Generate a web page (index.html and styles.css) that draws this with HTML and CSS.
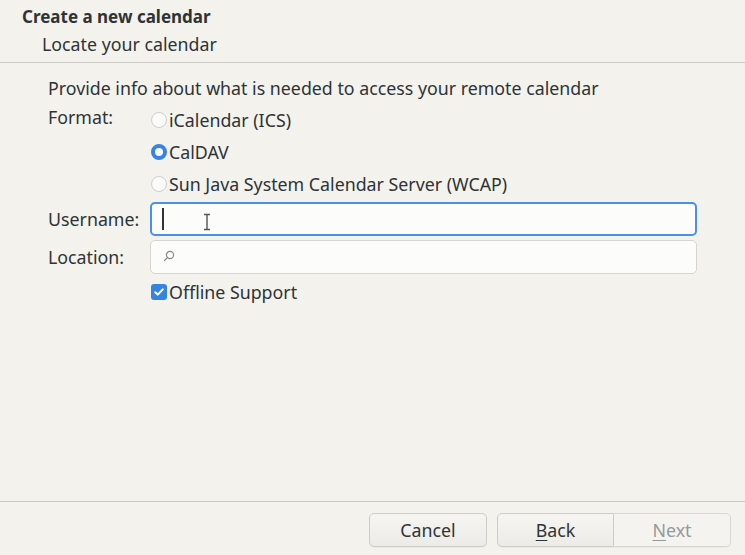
FILE: index.html
```html
<!DOCTYPE html>
<html>
<head>
<meta charset="utf-8">
<link rel="stylesheet" href="styles.css">
</head>
<body>
<div class="window">
  <header class="head">
    <div class="title">Create a new calendar</div>
    <div class="subtitle">Locate your calendar</div>
  </header>
  <main class="content">
    <div class="intro">Provide info about what is needed to access your remote calendar</div>
    <div class="form">
      <div class="label label-format">Format:</div>
      <div class="radios">
        <label class="choice"><span class="radio"></span>iCalendar (ICS)</label>
        <label class="choice"><span class="radio checked"></span>CalDAV</label>
        <label class="choice"><span class="radio"></span>Sun Java System Calendar Server (WCAP)</label>
      </div>
      <div class="label label-user">Username:</div>
      <div class="entry focused">
        <span class="caret"></span>
        <svg class="ibeam" width="8" height="18" viewBox="0 0 8 18"><path d="M1 1.5h6M1 16.5h6M4 1.5v15" stroke="#555" stroke-width="1.4" fill="none"/></svg>
      </div>
      <div class="label label-loc">Location:</div>
      <div class="entry">
        <svg class="search" width="12" height="12" viewBox="0 0 12 12"><circle cx="7" cy="5" r="3.6" stroke="#8a8a86" stroke-width="1.2" fill="none"/><path d="M4.4 7.6L1.5 10.5" stroke="#8a8a86" stroke-width="1.3" stroke-linecap="round"/></svg>
      </div>
      <div class="spacer"></div>
      <label class="choice check-row"><span class="checkbox"><svg width="12" height="12" viewBox="0 0 12 12"><path d="M2.2 6.2L4.8 8.6L9.8 3.4" stroke="#fff" stroke-width="2" fill="none" stroke-linecap="round" stroke-linejoin="round"/></svg></span>Offline Support</label>
    </div>
  </main>
  <footer class="foot">
    <button class="btn cancel">Cancel</button>
    <div class="linked">
      <button class="btn"><u>B</u>ack</button>
      <button class="btn disabled"><u>N</u>ext</button>
    </div>
  </footer>
</div>
</body>
</html>
```
FILE: styles.css
```css
html, body {
  margin: 0;
  padding: 0;
}
body {
  width: 745px;
  height: 555px;
  overflow: hidden;
  background: #f3f2ed;
  font-family: "Noto Sans", "Open Sans", sans-serif;
  font-size: 17.8px;
  color: #2e3436;
}
.window {
  height: 555px;
  display: flex;
  flex-direction: column;
}
.head {
  border-bottom: 1px solid #c9c8c3;
  box-sizing: border-box;
  height: 63px;
  flex: none;
}
.title {
  font-weight: bold;
  font-size: 17px;
  padding-left: 22px;
  height: 34px;
  line-height: 34px;
}
.subtitle {
  padding-left: 42px;
  line-height: 20px;
}
.content {
  flex: 1;
  padding: 15px 48px 0 48px;
}
.intro {
  line-height: 20px;
}
.form {
  display: grid;
  grid-template-columns: 102px 1fr;
  margin-top: 6px;
}
.label {
  line-height: 20px;
}
.label-format {
  padding-top: 3px;
}
.label-user, .label-loc {
  display: flex;
  align-items: center;
}
.label-user { margin-top: 2px; }
.label-loc { margin-top: 4px; }
.radios {
  display: flex;
  flex-direction: column;
}
.choice {
  height: 32px;
  display: flex;
  align-items: center;
  line-height: 20px;
}
.radio {
  width: 14px;
  height: 14px;
  border: 1px solid #d0cfca;
  border-radius: 50%;
  background: #fafaf8;
  margin-left: 1px;
  margin-right: 2px;
  flex: none;
}
.radio.checked {
  width: 8px;
  height: 8px;
  border: 4px solid #3584e4;
  background: #fff;
}
.entry {
  height: 34px;
  box-sizing: border-box;
  border: 1px solid #d6d5d0;
  border-radius: 5px;
  background: #fcfcfb;
  display: flex;
  align-items: center;
  position: relative;
}
.entry.focused {
  margin-top: 2px;
  border: 2px solid #4a90e8;
}
.entry:not(.focused) {
  margin-top: 4px;
}
.caret {
  width: 1.5px;
  height: 22px;
  background: #2e3436;
  margin-left: 10px;
}
.ibeam {
  position: absolute;
  left: 51px;
  top: 9px;
}
.search {
  margin-left: 12px;
  margin-top: -3px;
}
.spacer {
  height: 32px;
}
.check-row {
  margin-top: 2px;
}
.checkbox {
  width: 16px;
  height: 16px;
  border-radius: 3px;
  background: #3584e4;
  margin-left: 1px;
  margin-right: 2px;
  display: flex;
  align-items: center;
  justify-content: center;
  flex: none;
}
.foot {
  box-sizing: border-box;
  height: 54px;
  flex: none;
  border-top: 1px solid #c9c8c3;
  display: flex;
  justify-content: flex-end;
  align-items: flex-start;
  padding: 11px 14px 0 0;
  gap: 10px;
}
.linked {
  display: flex;
}
.btn {
  font-family: inherit;
  font-size: 17.8px;
  color: #2e3436;
  height: 34px;
  width: 117px;
  border: 1px solid #cdccc7;
  border-radius: 5px;
  background: linear-gradient(#f6f5f2, #edebe7);
  padding: 0;
  box-shadow: 0 1px 0 rgba(0,0,0,0.04);
}
.btn.cancel {
  width: 118px;
}
.linked .btn:first-child {
  border-top-right-radius: 0;
  border-bottom-right-radius: 0;
}
.linked .btn:last-child {
  border-top-left-radius: 0;
  border-bottom-left-radius: 0;
  border-left: none;
}
.btn.disabled {
  color: #959a9b;
  background: #f4f3f0;
  border-color: #d8d7d3;
}
.btn u {
  text-underline-offset: 3px;
}
```
